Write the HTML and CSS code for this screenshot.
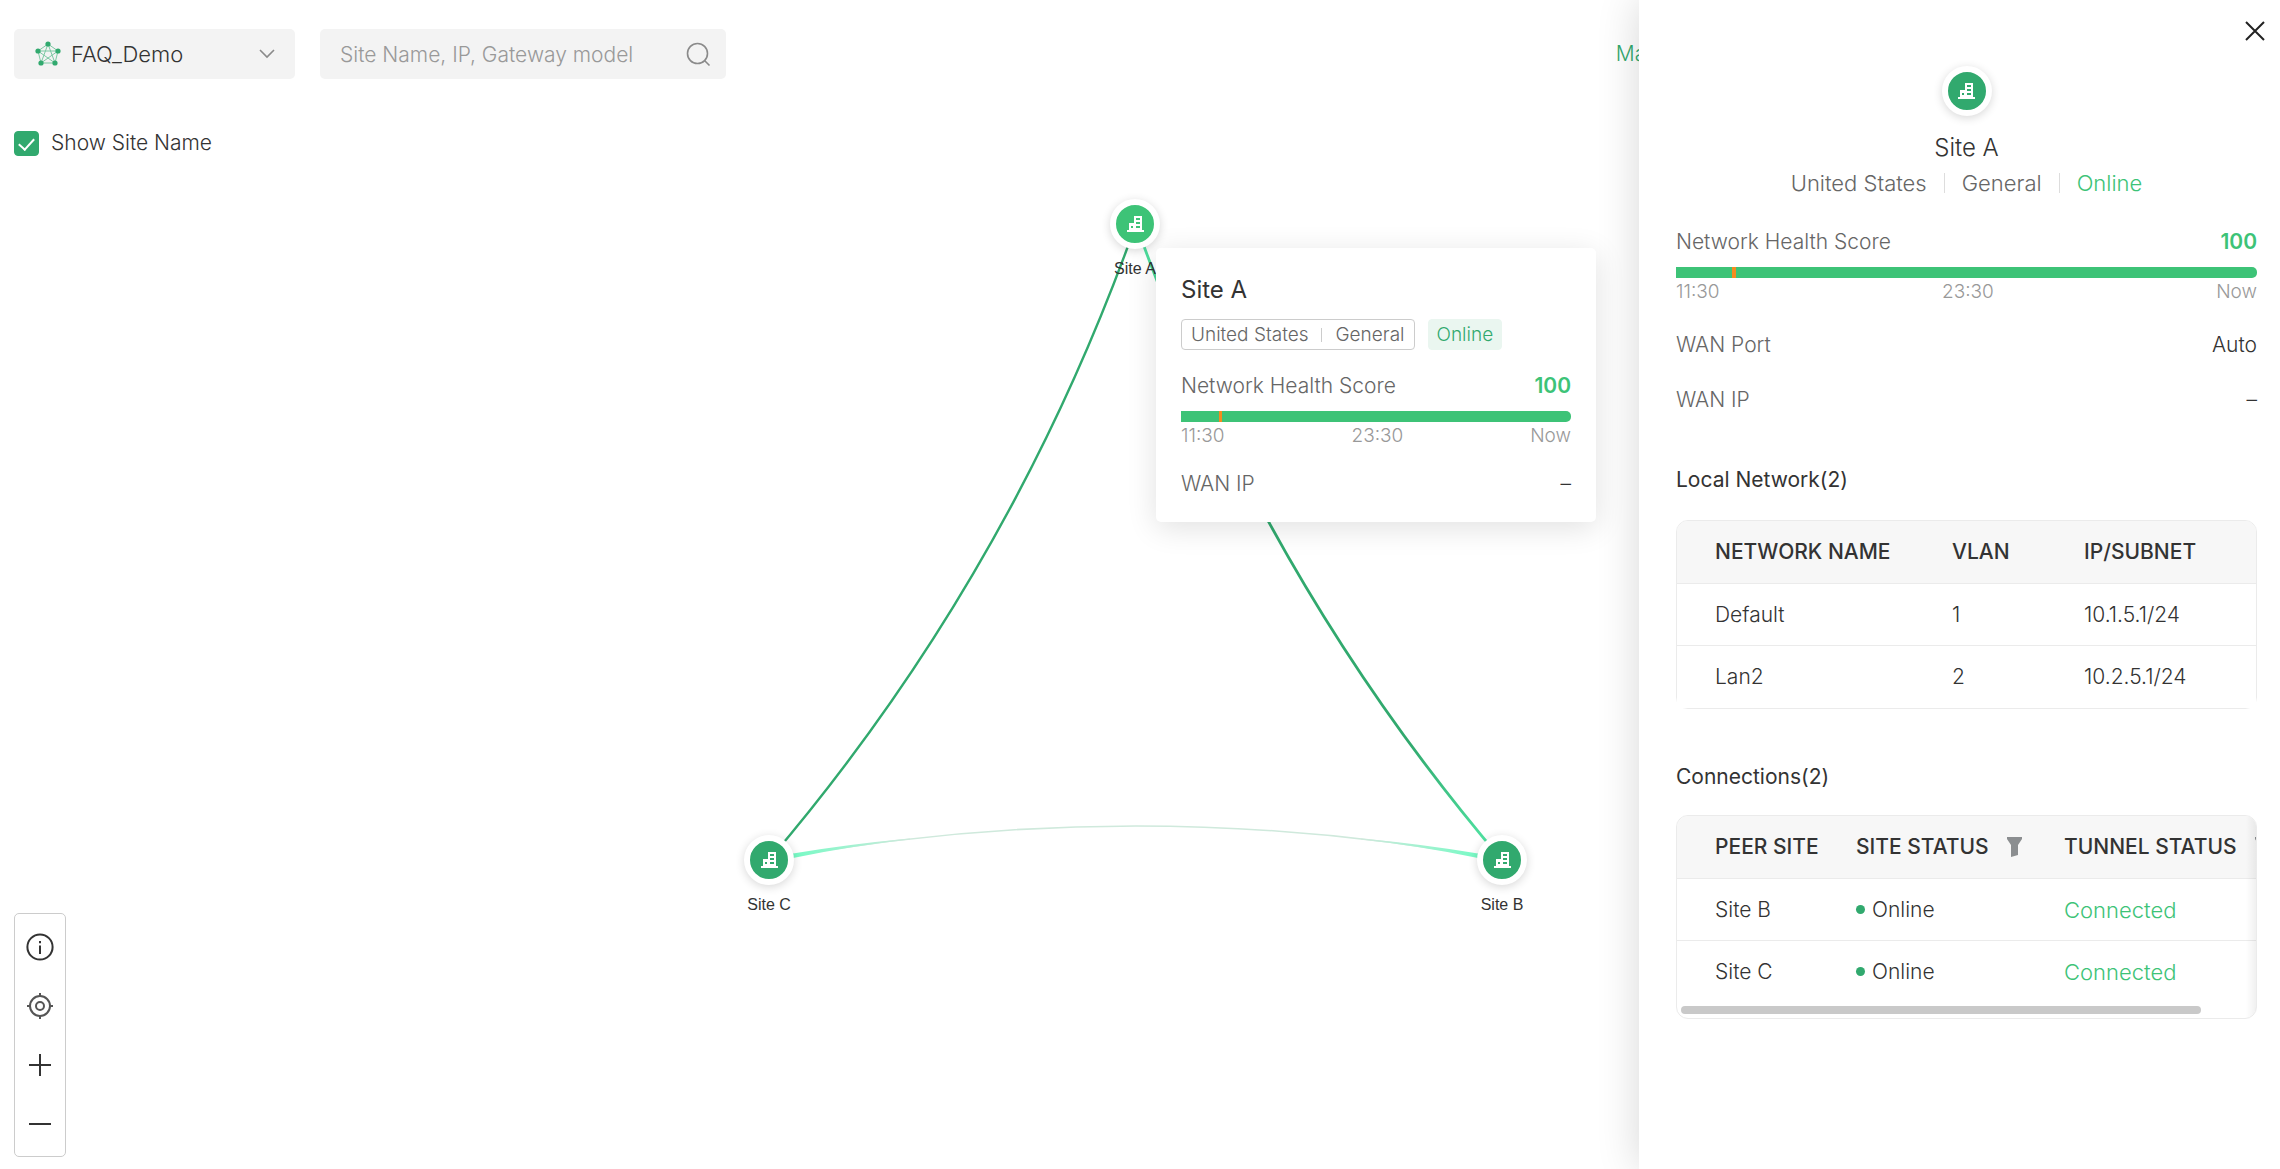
FILE: index.html
```html
<!DOCTYPE html>
<html lang="en">

<head>
    <meta charset="UTF-8">
    <meta name="viewport" content="width=device-width, initial-scale=1.0">
    <title>Site topology</title>
    <link rel="stylesheet" href="styles.css">
</head>

<body>

    <svg class="sprite" width="0" height="0" aria-hidden="true">
        <symbol id="building" viewBox="0 0 17 16">
            <path fill="currentColor" fill-rule="evenodd" d="M0 14h2V7h5V0h8v14h2v2H0zM9 2v2h4V2zM9 6v2h4V6zM9 10v2h4v-2zM4 10v2h2v-2z" />
        </symbol>
        <symbol id="filter" viewBox="0 0 15 20">
            <path fill="#8b8e90" d="M0 0h15v2l-4 6v10l-7 2V8L0 2z" />
        </symbol>
    </svg>

    <main class="topology">
        <!-- tunnels between the sites -->
        <svg class="links" aria-hidden="true">
            <defs>
                <linearGradient id="tunnelAB" gradientUnits="userSpaceOnUse" x1="1136" y1="224" x2="1502" y2="860">
                    <stop offset="0" stop-color="#55edab" />
                    <stop offset="0.2" stop-color="#31a96e" />
                    <stop offset="0.8" stop-color="#31a96e" />
                    <stop offset="1" stop-color="#55edab" />
                </linearGradient>
                <linearGradient id="fadeC" gradientUnits="userSpaceOnUse" x1="794" y1="0" x2="910" y2="0">
                    <stop offset="0" stop-color="#77fac5" />
                    <stop offset="1" stop-color="#cfe9dc" />
                </linearGradient>
                <linearGradient id="fadeB" gradientUnits="userSpaceOnUse" x1="1478" y1="0" x2="1362" y2="0">
                    <stop offset="0" stop-color="#77fac5" />
                    <stop offset="1" stop-color="#cfe9dc" />
                </linearGradient>
            </defs>
            <path d="M1136 224Q1011 576 769 860" fill="none" stroke="#31a96e" stroke-width="2.4" />
            <path d="M1136 224Q1260 576 1502 860" fill="none" stroke="url(#tunnelAB)" stroke-width="2.8" />
            <path d="M769 860Q1136 792 1502 860" fill="none" stroke="#cfe9dc" stroke-width="1.6" />
            <path d="M793 853.5Q850 844 910 838.5L910 839.5Q850 846 793 858z" fill="url(#fadeC)" />
            <path d="M1478 853.5Q1421 844 1361 838.5L1361 839.5Q1421 846 1478 858z" fill="url(#fadeB)" />
        </svg>

        <div class="node nodeA">
            <span class="siteIcon siteIconActive"><svg width="17" height="16"><use href="#building" /></svg></span>
            <span class="nodeName">Site A</span>
        </div>
        <div class="node nodeB">
            <span class="siteIcon"><svg width="17" height="16"><use href="#building" /></svg></span>
            <span class="nodeName">Site B</span>
        </div>
        <div class="node nodeC">
            <span class="siteIcon"><svg width="17" height="16"><use href="#building" /></svg></span>
            <span class="nodeName">Site C</span>
        </div>

        <header class="toolbar">
            <div class="selectBox">
                <svg class="groupIcon" width="26" height="26" viewBox="0 0 26 26" aria-hidden="true">
                    <path d="M13 3L23 10L20 22H6L3 10zM13 3L20 22L3 10H23L6 22z" fill="none" stroke="#7cc9a3" />
                    <g fill="#31a96e">
                        <circle cx="13" cy="3" r="2.6" />
                        <circle cx="23" cy="10" r="2.6" />
                        <circle cx="20" cy="22" r="2.6" />
                        <circle cx="6" cy="22" r="2.6" />
                        <circle cx="3" cy="10" r="2.6" />
                    </g>
                </svg>
                <select class="groupSelect" aria-label="Site group">
                    <option>FAQ_Demo</option>
                </select>
                <svg class="chevron" width="16" height="10" viewBox="0 0 16 10" aria-hidden="true">
                    <path d="M1 1l7 7 7-7" fill="none" stroke="#8a8a8a" stroke-width="1.6" />
                </svg>
            </div>
            <div class="searchBox">
                <input class="searchInput" type="text" aria-label="Search sites" placeholder="Site Name, IP, Gateway model">
                <button class="iconButton" type="button" aria-label="Search">
                    <svg width="25" height="25" viewBox="0 0 25 25">
                        <circle cx="11.5" cy="11.5" r="10" fill="none" stroke="#8a8a8a" stroke-width="1.6" />
                        <path d="M18.5 18.5l5 5" stroke="#8a8a8a" stroke-width="1.6" />
                    </svg>
                </button>
            </div>
            <a class="manageLink" href="#">Manage</a>
        </header>

        <label class="showName">
            <input class="checkbox" type="checkbox" checked>
            Show Site Name
        </label>

        <div class="zoomTools">
            <button class="toolButton" type="button" aria-label="Info">
                <svg width="28" height="28" viewBox="0 0 28 28">
                    <circle cx="14" cy="14" r="12.6" fill="none" stroke="#333" stroke-width="2" />
                    <path d="M14 12.5V21M14 8v2.2" stroke="#333" stroke-width="2" />
                </svg>
            </button>
            <button class="toolButton" type="button" aria-label="Center">
                <svg width="28" height="28" viewBox="0 0 28 28" fill="none" stroke="#555" stroke-width="2">
                    <circle cx="14" cy="14" r="10" />
                    <circle cx="14" cy="14" r="4" />
                    <path d="M14 1v4M14 23v4M1 14h4M23 14h4" />
                </svg>
            </button>
            <button class="toolButton" type="button" aria-label="Zoom in">
                <svg width="24" height="24" viewBox="0 0 24 24" stroke="#333" stroke-width="2">
                    <path d="M12 1v22M1 12h22" />
                </svg>
            </button>
            <button class="toolButton" type="button" aria-label="Zoom out">
                <svg width="24" height="24" viewBox="0 0 24 24" stroke="#333" stroke-width="2">
                    <path d="M1 12h22" />
                </svg>
            </button>
        </div>

        <div class="tooltip">
            <h2 class="siteTitle">Site A</h2>
            <div class="tags">
                <span class="tag">United States<i class="tagDivider"></i>General</span>
                <span class="tag tagOnline">Online</span>
            </div>
            <div class="row">
                <span>Network Health Score</span>
                <span class="score">100</span>
            </div>
            <div class="healthBar"><span class="healthIssue"></span></div>
            <div class="healthTimes"><span>11:30</span><span>23:30</span><span>Now</span></div>
            <div class="row rowWan">
                <span>WAN IP</span>
                <span class="value">–</span>
            </div>
        </div>
    </main>

    <aside class="panel">
        <button class="closeButton" type="button" aria-label="Close">
            <svg width="20" height="20" viewBox="0 0 20 20">
                <path d="M1 1l18 18M19 1L1 19" stroke="#222" stroke-width="2" />
            </svg>
        </button>
        <div class="panelHead">
            <span class="siteIcon"><svg width="17" height="16"><use href="#building" /></svg></span>
            <h2 class="siteTitle">Site A</h2>
            <div class="siteMeta">
                <span>United States</span>
                <span>General</span>
                <span class="online">Online</span>
            </div>
        </div>
        <div class="row">
            <span>Network Health Score</span>
            <span class="score">100</span>
        </div>
        <div class="healthBar"><span class="healthIssue healthIssueWide"></span></div>
        <div class="healthTimes"><span>11:30</span><span>23:30</span><span>Now</span></div>
        <div class="row rowPort">
            <span>WAN Port</span>
            <span class="value">Auto</span>
        </div>
        <div class="row rowIp">
            <span>WAN IP</span>
            <span class="value">–</span>
        </div>

        <h3 class="sectionTitle">Local Network(2)</h3>
        <div class="tableBox">
            <table class="networkTable">
                <thead>
                    <tr><th>NETWORK NAME</th><th>VLAN</th><th>IP/SUBNET</th></tr>
                </thead>
                <tbody>
                    <tr><td>Default</td><td>1</td><td>10.1.5.1/24</td></tr>
                    <tr><td>Lan2</td><td>2</td><td>10.2.5.1/24</td></tr>
                </tbody>
            </table>
        </div>

        <h3 class="sectionTitle">Connections(2)</h3>
        <div class="tableBox tableScroll">
            <table class="peerTable">
                <thead>
                    <tr>
                        <th>PEER SITE</th>
                        <th><span class="filterHead">SITE STATUS<svg width="15" height="20"><use href="#filter" /></svg></span></th>
                        <th><span class="filterHead">TUNNEL STATUS<svg width="15" height="20"><use href="#filter" /></svg></span></th>
                    </tr>
                </thead>
                <tbody>
                    <tr><td>Site B</td><td><i class="dot"></i>Online</td><td class="online">Connected</td></tr>
                    <tr><td>Site C</td><td><i class="dot"></i>Online</td><td class="online">Connected</td></tr>
                </tbody>
            </table>
            <div class="scrollTrack"><div class="scrollThumb"></div></div>
        </div>
    </aside>

</body>

</html>
```

FILE: styles.css
```css
* {
    box-sizing: border-box;
}

body {
    margin: 0;
    min-height: 100vh;
    position: relative;
    overflow: hidden;
    background: #fff;
    color: #333;
    font-family: Inter, sans-serif;
    font-size: 21px;
    font-weight: 300;
    line-height: 30px;
}

button,
input,
select {
    font: inherit;
    color: inherit;
    border: 0;
    padding: 0;
    background: none;
}

h2,
h3 {
    margin: 0;
    font-weight: 400;
}

svg {
    display: block;
    flex: none;
}

.sprite {
    position: absolute;
}

.topology {
    min-height: 100vh;
    position: relative;
    padding: 29px 0 0 14px;
}

.links {
    position: absolute;
    top: 0;
    left: 0;
    width: 100%;
    height: 100%;
}

/* nodes */

.node {
    position: absolute;
    width: 80px;
    display: flex;
    flex-direction: column;
    align-items: center;
    gap: 11px;
}

.nodeA {
    left: 1095px;
    top: 199px;
}

.nodeB {
    left: 1462px;
    top: 835px;
}

.nodeC {
    left: 729px;
    top: 835px;
}

.nodeName {
    font-family: "Liberation Sans", Arial, sans-serif;
    font-size: 16px;
    font-weight: 400;
    line-height: 18px;
}

.siteIcon {
    width: 50px;
    height: 50px;
    border: 6px solid #fff;
    border-radius: 50%;
    background: #31a96e;
    color: #fff;
    box-shadow: 0 2px 10px rgba(0, 0, 0, 0.16);
    display: flex;
    align-items: center;
    justify-content: center;
}

.siteIconActive {
    background: #3dc377;
}

/* toolbar */

.toolbar {
    position: relative;
    display: flex;
    align-items: center;
    gap: 25px;
    padding-right: 585px;
}

.selectBox,
.searchBox {
    height: 50px;
    border-radius: 5px;
    background: #f3f3f3;
    display: flex;
    align-items: center;
}

.selectBox {
    width: 281px;
    position: relative;
}

.groupIcon {
    position: absolute;
    left: 21px;
    pointer-events: none;
}

.chevron {
    position: absolute;
    right: 20px;
    pointer-events: none;
}

.groupSelect {
    width: 100%;
    height: 50px;
    padding-left: 57px;
    font-size: 22px;
    appearance: none;
}

.searchBox {
    width: 406px;
    padding: 0 15px 0 20px;
}

.searchInput {
    flex: 1;
    min-width: 0;
    height: 50px;
}

.searchInput::placeholder {
    color: #999;
    opacity: 1;
}

.manageLink {
    margin-left: auto;
    color: #31a96e;
    text-decoration: none;
}

.showName {
    position: relative;
    display: inline-flex;
    align-items: center;
    gap: 12px;
    margin-top: 49px;
}

.checkbox {
    appearance: none;
    width: 25px;
    height: 25px;
    margin: 0;
    border-radius: 4px;
    border: 1px solid #31a96e;
    display: flex;
    justify-content: center;
}

.checkbox:checked {
    background: #31a96e;
}

.checkbox:checked::after {
    content: "";
    width: 7px;
    height: 13px;
    margin-top: 3px;
    border: solid #fff;
    border-width: 0 2px 2px 0;
    transform: rotate(42deg);
}

.zoomTools {
    position: absolute;
    left: 14px;
    bottom: 12px;
    width: 52px;
    padding: 4px 0 3px;
    border: 1px solid #ccc;
    border-radius: 5px;
    background: #fff;
    display: flex;
    flex-direction: column;
    gap: 1px;
}

.toolButton {
    height: 58px;
    display: flex;
    align-items: center;
    justify-content: center;
}

/* site details */

.tooltip {
    position: absolute;
    left: 1156px;
    top: 248px;
    width: 440px;
    padding: 27px 25px 23px;
    border-radius: 5px;
    background: #fff;
    box-shadow: 0 6px 30px rgba(0, 0, 0, 0.12);
}

.siteTitle {
    font-size: 24px;
}

.tags {
    display: flex;
    gap: 13px;
    margin: 14px 0 21px;
}

.tag {
    height: 31px;
    padding: 0 9px;
    border: 1px solid #ccc;
    border-radius: 4px;
    color: #666;
    font-size: 19px;
    line-height: 28px;
    display: flex;
    align-items: center;
}

.tagOnline {
    padding: 0 8px;
    border-color: #eaf6f0;
    background: #eaf6f0;
    color: #31a96e;
}

.tagDivider {
    width: 1px;
    height: 14px;
    margin: 0 13px;
    background: #ccc;
}

.row {
    display: flex;
    justify-content: space-between;
    color: #666;
}

.rowWan {
    margin-top: 21px;
}

.rowPort {
    margin-top: 26px;
}

.rowIp {
    margin-top: 25px;
}

.value {
    color: #333;
}

.score {
    color: #3dc377;
    font-weight: 600;
}

.healthBar {
    height: 11px;
    margin-top: 10px;
    padding-left: 38px;
    border-radius: 0 5px 5px 0;
    background: #3dc377;
}

.healthIssue {
    display: block;
    width: 3px;
    height: 11px;
    background: #f58b1f;
}

.healthIssueWide {
    width: 4px;
    margin-left: 18px;
}

.healthTimes {
    display: flex;
    justify-content: space-between;
    margin-top: 2px;
    color: #999;
    font-size: 19px;
    line-height: 24px;
}

.panel {
    position: absolute;
    top: 0;
    right: 0;
    bottom: 0;
    width: 641px;
    padding: 66px 23px 0 37px;
    background: #fff;
    box-shadow: 0 0 40px rgba(0, 0, 0, 0.16);
}

.closeButton {
    position: absolute;
    top: 21px;
    right: 15px;
}

.panelHead {
    display: flex;
    flex-direction: column;
    align-items: center;
    margin-bottom: 29px;
}

.panelHead .siteTitle {
    margin: 17px 0 5px;
    font-weight: 300;
}

.siteMeta {
    display: flex;
    align-items: center;
    color: #666;
    font-size: 22px;
}

.siteMeta span + span {
    display: flex;
    align-items: center;
}

.siteMeta span + span::before {
    content: "";
    width: 1px;
    height: 20px;
    margin: 0 17px;
    background: #ddd;
}

.siteMeta .online,
.online {
    color: #3dc377;
}

/* tables */

.sectionTitle {
    margin: 50px 0 25px;
    font-size: 21px;
}

.tableBox + .sectionTitle {
    margin: 53px 0 23px;
}

.tableBox {
    border: 1px solid #ebebeb;
    border-radius: 12px;
}

table {
    width: 100%;
    border-spacing: 0;
    table-layout: fixed;
}

th,
td {
    height: 63px;
    padding: 0 0 0 38px;
    text-align: left;
    white-space: nowrap;
    background: #fff;
}

td {
    height: 62px;
}

th {
    font-weight: 500;
    background: #f7f7f7;
}

th:first-child {
    border-top-left-radius: 11px;
}

th:last-child {
    border-top-right-radius: 11px;
}

th,
tbody tr:not(:last-child) td {
    border-bottom: 1px solid #ebebeb;
}

.networkTable th:nth-child(1) {
    width: 237px;
}

.networkTable th:nth-child(2) {
    width: 132px;
}

.tableScroll {
    position: relative;
    overflow: hidden;
}

.tableScroll::after {
    content: "";
    position: absolute;
    top: 0;
    right: 0;
    bottom: 0;
    width: 10px;
    background: linear-gradient(to right, transparent, rgba(0, 0, 0, 0.06));
}

.peerTable {
    width: 636px;
}

.peerTable th:nth-child(1) {
    width: 141px;
}

.peerTable th:nth-child(2) {
    width: 208px;
}

.peerTable .online {
    font-size: 22px;
}

.filterHead {
    display: flex;
    align-items: center;
    gap: 18px;
}

.dot {
    display: inline-block;
    width: 9px;
    height: 9px;
    margin-right: 7px;
    border-radius: 50%;
    background: #31a96e;
    vertical-align: 3px;
}

.scrollTrack {
    padding: 3px 4px 4px;
}

.scrollThumb {
    width: 91%;
    height: 8px;
    border-radius: 4px;
    background: #c9c9c9;
}
```
